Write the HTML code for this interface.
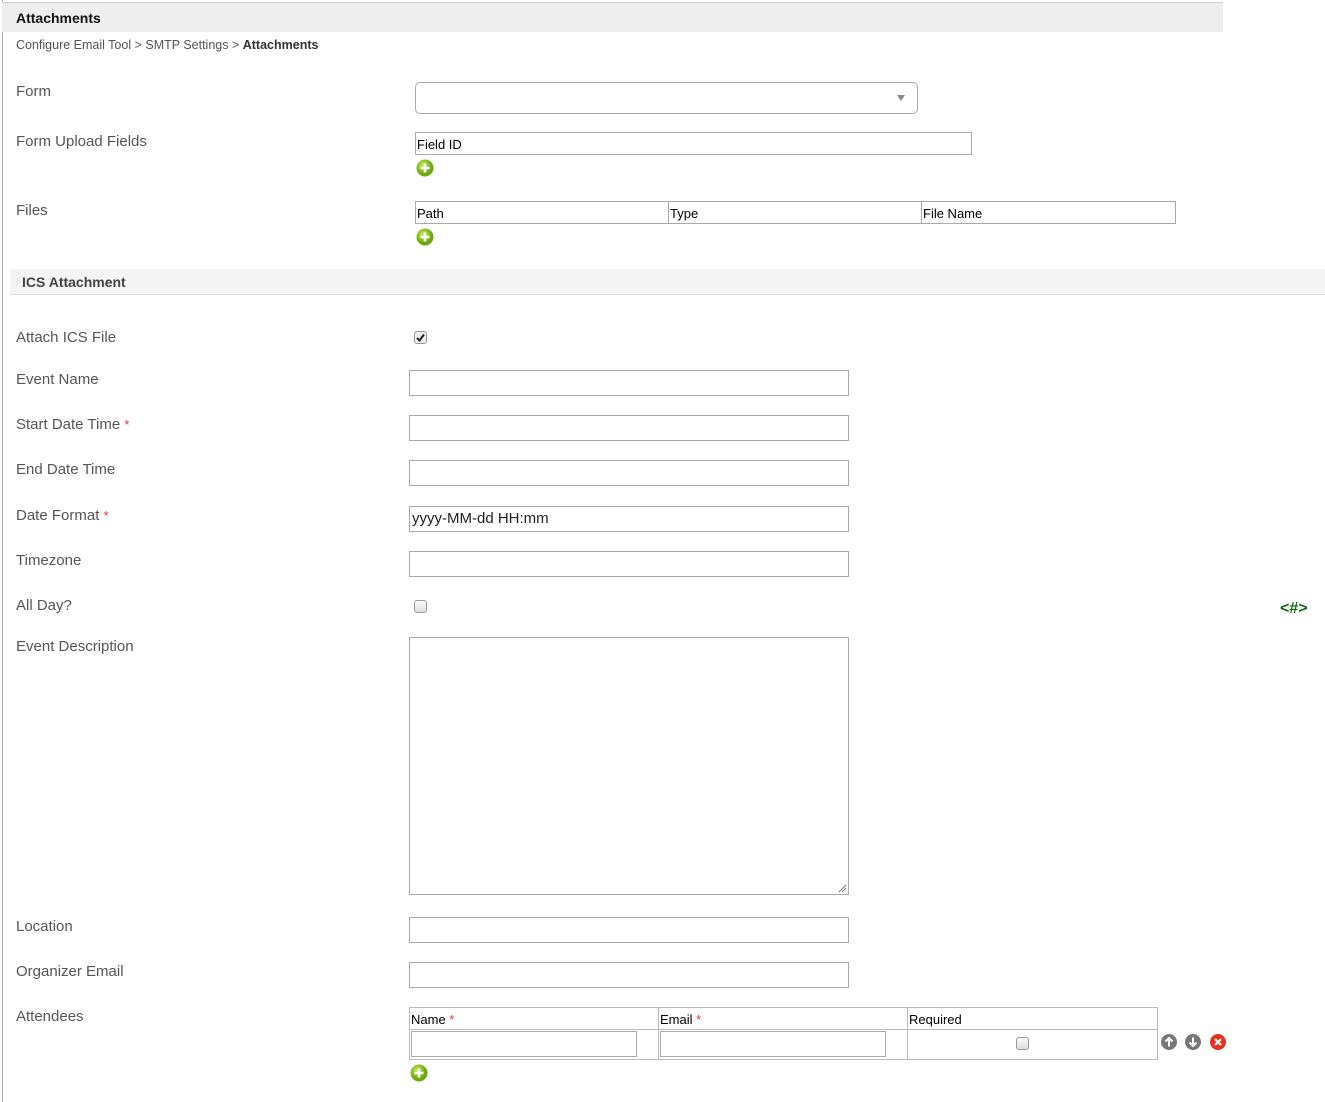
<!DOCTYPE html>
<html><head><meta charset="utf-8"><style>
*{box-sizing:border-box;margin:0;padding:0}
body{width:1325px;height:1102px;background:#fff;font-family:"Liberation Sans",Arial,sans-serif;position:relative;overflow:hidden}
.a{position:absolute}
.lbl{position:absolute;left:16px;font-size:15px;color:#555;line-height:18px;margin-top:1px}
.req{color:#e33;font-size:13px}
.inp{position:absolute;left:409px;width:440px;height:26px;border:1px solid #aaa;background:#fff}
.th{font-size:13px;color:#000;line-height:23px;padding-left:1px}
.cb{position:absolute;width:13px;height:13px;border:1px solid #999;border-radius:3px;background:linear-gradient(#fafafa,#ddd)}
</style></head><body>
<div class="a" style="left:2px;top:0;width:1px;height:1102px;background:#aaa"></div>
<div class="a" style="left:2px;top:2px;width:1221px;height:30px;background:#eee;border-top:1px solid #ccc"></div>
<div class="a" style="left:16px;top:10px;font-size:14px;font-weight:bold;color:#111">Attachments</div>
<div class="a" style="left:16px;top:38px;font-size:12.5px;color:#555">Configure Email Tool &gt; SMTP Settings &gt; <b style="color:#333">Attachments</b></div>

<div class="lbl" style="top:82px">Form</div>
<div class="a" style="left:415px;top:82px;width:503px;height:32px;border:1px solid #aaa;border-radius:5px"></div>
<div class="a" style="left:897px;top:95px;width:0;height:0;border-left:4px solid transparent;border-right:4px solid transparent;border-top:6px solid #888"></div>

<div class="lbl" style="top:132px">Form Upload Fields</div>
<div class="a th" style="left:415px;top:132px;width:557px;height:23px;border:1px solid #aaa">Field ID</div>
<svg class="a" style="left:416px;top:159px" width="18" height="18"><defs><radialGradient id="g" cx="40%" cy="35%"><stop offset="0" stop-color="#c8ef5a"/><stop offset="1" stop-color="#6aa80c"/></radialGradient></defs><circle cx="9" cy="9" r="8.5" fill="url(#g)"/><path d="M9 4.5v9M4.5 9h9" stroke="#fff" stroke-width="2.6"/></svg>

<div class="lbl" style="top:201px">Files</div>
<div class="a" style="left:415px;top:201px;width:761px;height:23px;border:1px solid #aaa;display:flex">
<div class="th" style="width:253px;border-right:1px solid #aaa">Path</div>
<div class="th" style="width:253px;border-right:1px solid #aaa">Type</div>
<div class="th">File Name</div></div>
<svg class="a" style="left:416px;top:228px" width="18" height="18"><circle cx="9" cy="9" r="8.5" fill="url(#g)"/><path d="M9 4.5v9M4.5 9h9" stroke="#fff" stroke-width="2.6"/></svg>

<div class="a" style="left:10px;top:269px;width:1315px;height:26px;background:#f4f4f4;border-bottom:1px solid #ddd"></div>
<div class="a" style="left:22px;top:274px;font-size:14px;font-weight:bold;color:#444">ICS Attachment</div>

<div class="lbl" style="top:328px">Attach ICS File</div>
<div class="cb" style="left:414px;top:331px;background:#eee"><svg width="11" height="11" style="position:absolute;left:0;top:0"><path d="M2 6l2.5 2.5L9 2.5" stroke="#222" stroke-width="2" fill="none"/></svg></div>

<div class="lbl" style="top:370px">Event Name</div><div class="inp" style="top:370px"></div>
<div class="lbl" style="top:415px">Start Date Time <span class="req">*</span></div><div class="inp" style="top:415px"></div>
<div class="lbl" style="top:460px">End Date Time</div><div class="inp" style="top:460px"></div>
<div class="lbl" style="top:506px">Date Format <span class="req">*</span></div><div class="inp" style="top:506px;font-size:15px;line-height:24px;padding-left:2px;color:#222">yyyy-MM-dd HH:mm</div>
<div class="lbl" style="top:551px">Timezone</div><div class="inp" style="top:551px"></div>
<div class="lbl" style="top:596px">All Day?</div>
<div class="cb" style="left:414px;top:600px"></div>
<div class="a" style="left:1280px;top:600px;font-size:16px;font-weight:bold;color:#0a6b0a">&lt;#&gt;</div>

<div class="lbl" style="top:637px">Event Description</div>
<div class="inp" style="top:637px;height:258px"><svg style="position:absolute;right:1px;bottom:1px" width="9" height="9"><path d="M8 1L1 8M8 4L4 8" stroke="#777" stroke-width="1"/></svg></div>

<div class="lbl" style="top:917px">Location</div><div class="inp" style="top:917px"></div>
<div class="lbl" style="top:962px">Organizer Email</div><div class="inp" style="top:962px"></div>
<div class="lbl" style="top:1007px">Attendees</div>

<div class="a" style="left:409px;top:1007px;width:749px;height:53px;border:1px solid #bbb">
<div style="display:flex;height:22px;border-bottom:1px solid #bbb">
<div class="th" style="width:249px;border-right:1px solid #bbb">Name <span class="req">*</span></div>
<div class="th" style="width:249px;border-right:1px solid #bbb">Email <span class="req">*</span></div>
<div class="th">Required</div></div>
<div style="display:flex;height:29px">
<div style="width:249px;border-right:1px solid #bbb;padding:1px"><div style="width:226px;height:26px;border:1px solid #aaa"></div></div>
<div style="width:249px;border-right:1px solid #bbb;padding:1px"><div style="width:226px;height:26px;border:1px solid #aaa"></div></div>
<div style="position:relative;flex:1"><div class="cb" style="left:108px;top:7px"></div></div>
</div></div>
<svg class="a" style="left:1160px;top:1033px" width="70" height="18">
<circle cx="9" cy="9" r="8" fill="#777"/><path d="M9 13.5V5M5.5 8.5L9 5l3.5 3.5" stroke="#fff" stroke-width="2" fill="none"/>
<circle cx="33" cy="9" r="8" fill="#777"/><path d="M33 4.5V13M29.5 9.5L33 13l3.5-3.5" stroke="#fff" stroke-width="2" fill="none"/>
<circle cx="58" cy="9" r="8" fill="#e8321a"/><path d="M55 6l6 6M61 6l-6 6" stroke="#fff" stroke-width="2.2"/>
</svg>
<svg class="a" style="left:410px;top:1064px" width="18" height="18"><circle cx="9" cy="9" r="8.5" fill="url(#g)"/><path d="M9 4.5v9M4.5 9h9" stroke="#fff" stroke-width="2.6"/></svg>
</body></html>
